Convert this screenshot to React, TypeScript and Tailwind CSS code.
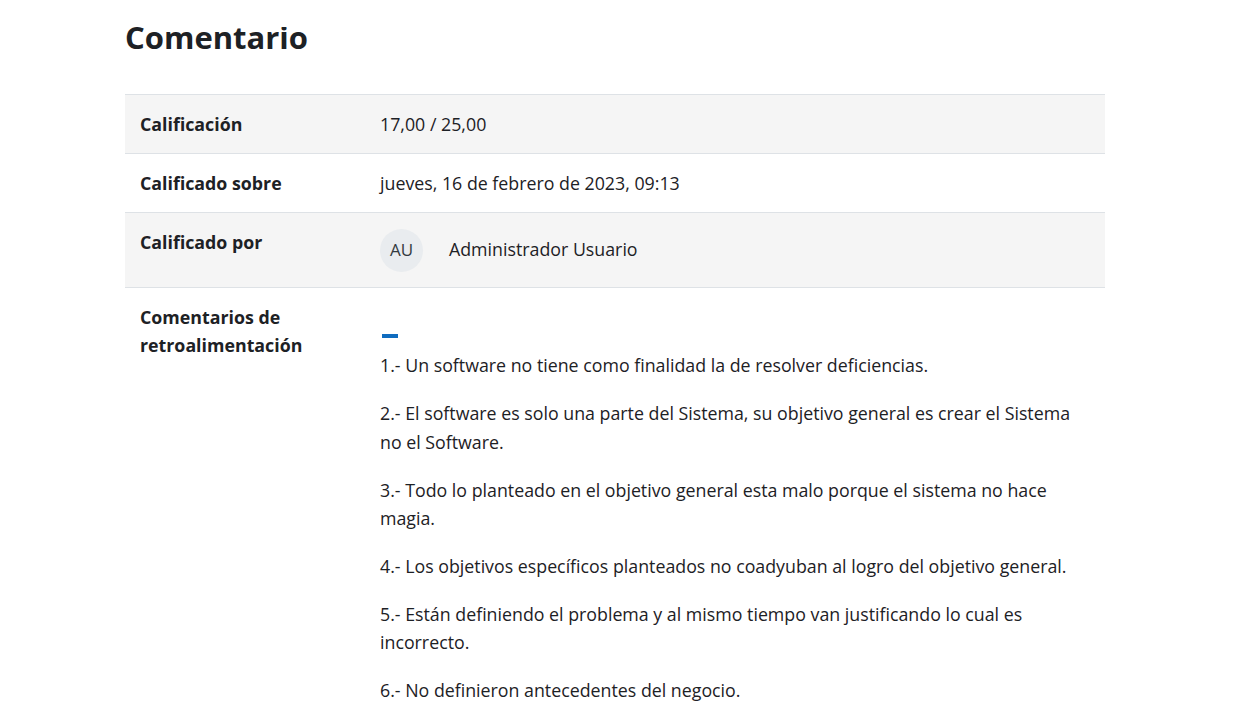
import React from 'react';

const feedback = [
  '1.- Un software no tiene como finalidad la de resolver deficiencias.',
  '2.- El software es solo una parte del Sistema, su objetivo general es crear el Sistema no el Software.',
  '3.- Todo lo planteado en el objetivo general esta malo porque el sistema no hace magia.',
  '4.- Los objetivos específicos planteados no coadyuban al logro del objetivo general.',
  '5.- Están definiendo el problema y al mismo tiempo van justificando lo cual es incorrecto.',
  '6.- No definieron antecedentes del negocio.',
];

const Row = ({ label, striped, children }: { label: React.ReactNode; striped?: boolean; children: React.ReactNode }) => (
  <div className={`grid grid-cols-[240px_1fr] border-t border-[#dee2e6] ${striped ? 'bg-[#f5f5f5]' : 'bg-white'}`}>
    <div className="px-[15px] py-[15px] font-bold">{label}</div>
    <div className="px-[15px] py-[15px]">{children}</div>
  </div>
);

export default function App() {
  return (
    <div
      className="min-h-[712px] bg-white text-[#1d2125] text-[17.8px] leading-[28.125px]"
      style={{ fontFamily: '"Open Sans", "Noto Sans", sans-serif' }}
    >
      <div className="ml-[125px] w-[980px]">
        {/* heading is scrolled partly out of view */}
        <div className="mt-[27px] h-[67px] overflow-hidden">
          <h2 className="-mt-[14px] text-[31px] leading-[48px] font-bold">Comentario</h2>
        </div>
        <div className="border-b border-[#dee2e6]">
          <Row label="Calificación" striped>
            17,00 / 25,00
          </Row>
          <Row label="Calificado sobre">jueves, 16 de febrero de 2023, 09:13</Row>
          <Row label="Calificado por" striped>
            <div className="flex items-center h-[44px]">
              <span className="flex items-center justify-center w-[43px] h-[43px] rounded-full bg-[#e9ecef] text-[#343a40] text-[17px]">
                AU
              </span>
              <span className="ml-[26px] -mt-[2px]">Administrador Usuario</span>
            </div>
          </Row>
          <Row
            label={
              <>
                Comentarios de
                <br />
                retroalimentación
              </>
            }
          >
            <div className="pt-[31px] pb-[13px] pl-[2px]">
              <div className="w-[16px] h-[4px] bg-[#0f6cbf]" />
            </div>
            {feedback.map((t) => (
              <p key={t} className="mb-[20px] pr-[5px]">
                {t}
              </p>
            ))}
          </Row>
        </div>
      </div>
    </div>
  );
}
